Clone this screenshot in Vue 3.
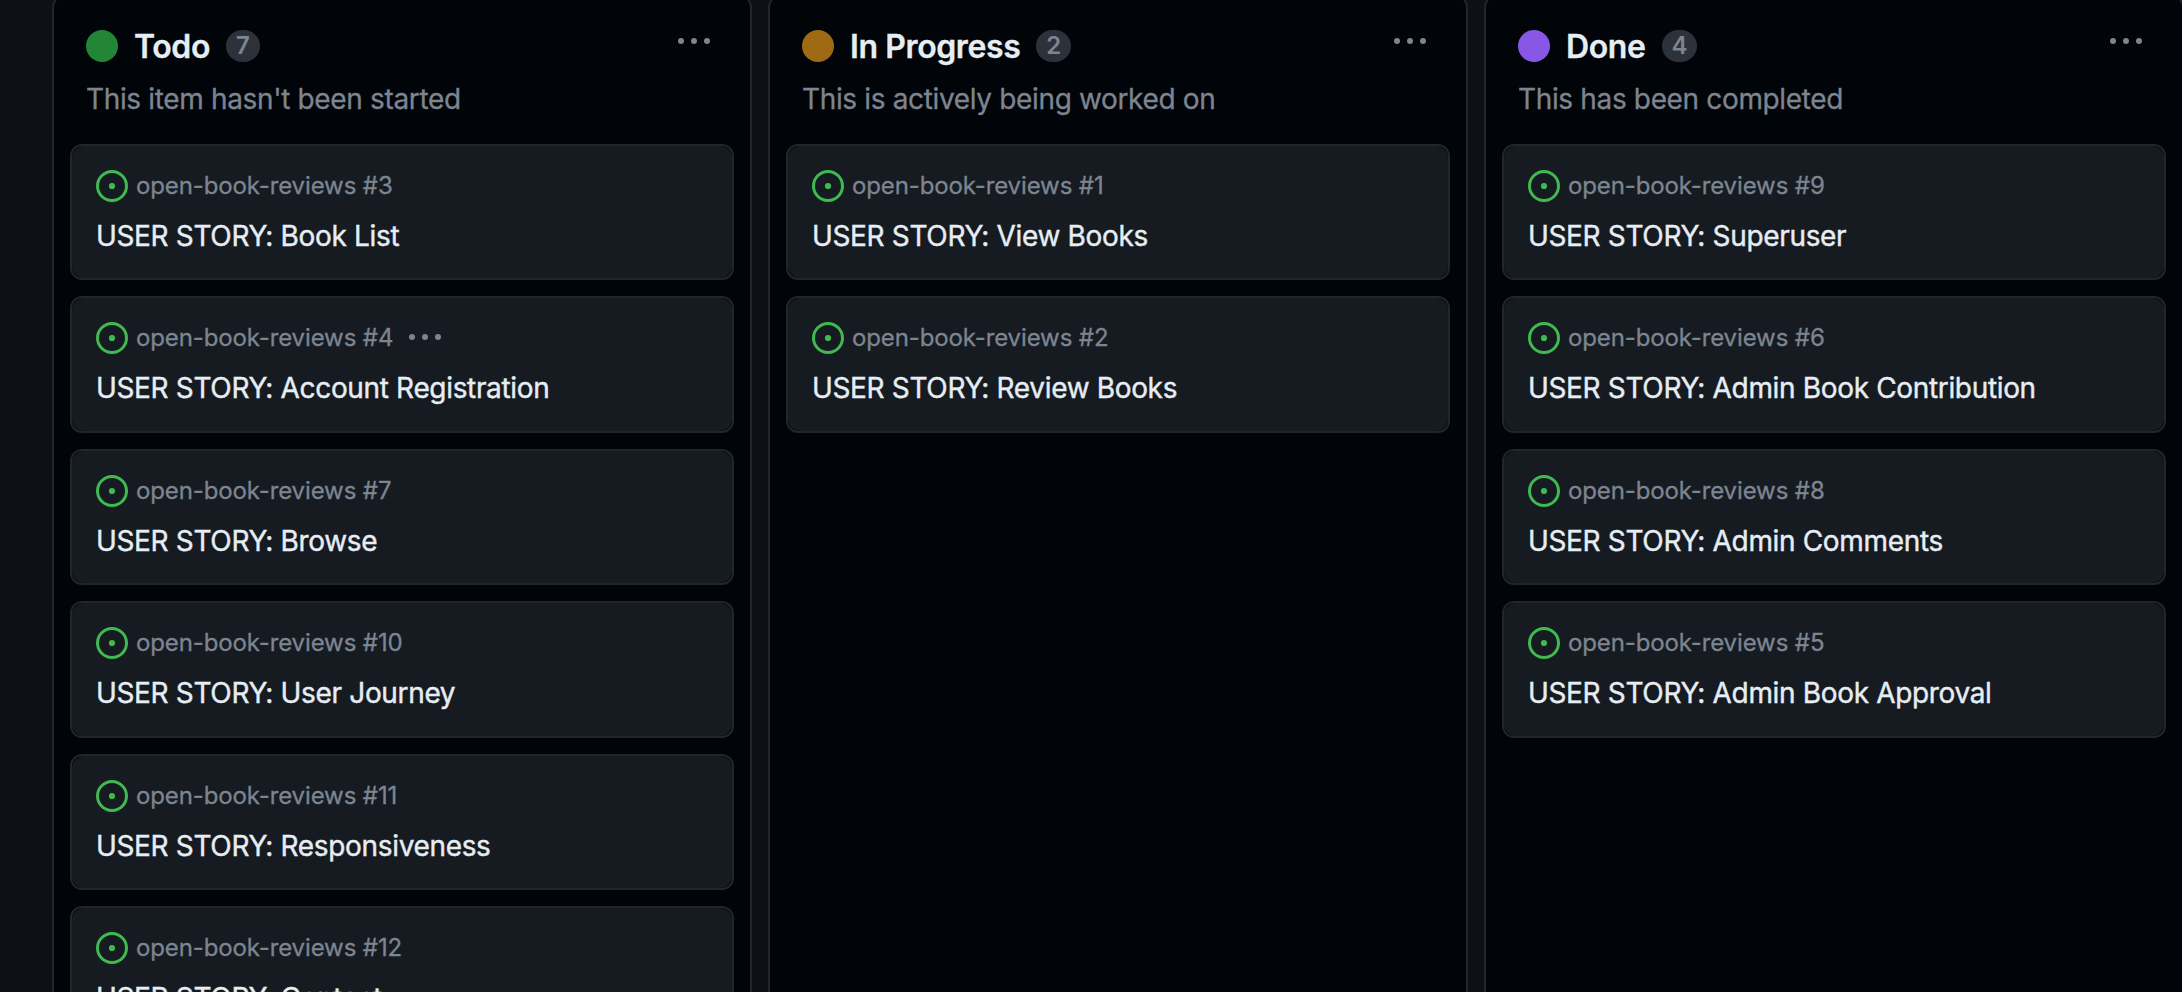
<script setup>
const columns = [
  {
    name: 'Todo',
    tone: 'green',
    count: 7,
    description: "This item hasn't been started",
    cards: [
      { number: 3, title: 'Book List' },
      { number: 4, title: 'Account Registration', menu: true },
      { number: 7, title: 'Browse' },
      { number: 10, title: 'User Journey' },
      { number: 11, title: 'Responsiveness' },
      { number: 12, title: 'Contact' },
    ],
  },
  {
    name: 'In Progress',
    tone: 'amber',
    count: 2,
    description: 'This is actively being worked on',
    cards: [
      { number: 1, title: 'View Books' },
      { number: 2, title: 'Review Books' },
    ],
  },
  {
    name: 'Done',
    tone: 'purple',
    count: 4,
    description: 'This has been completed',
    cards: [
      { number: 9, title: 'Superuser' },
      { number: 6, title: 'Admin Book Contribution' },
      { number: 8, title: 'Admin Comments' },
      { number: 5, title: 'Admin Book Approval' },
    ],
  },
]
</script>

<template>
  <main class="board">
    <section v-for="column in columns" :key="column.name" class="column">
      <header class="head">
        <div class="heading">
          <span class="dot" :class="column.tone"></span>
          <h2 class="name">{{ column.name }}</h2>
          <span class="count">{{ column.count }}</span>
          <svg class="kebab" viewBox="0 0 32 6" width="32" height="6">
            <circle cx="3" cy="3" r="3" />
            <circle cx="16" cy="3" r="3" />
            <circle cx="29" cy="3" r="3" />
          </svg>
        </div>
        <p class="description">{{ column.description }}</p>
      </header>
      <div class="cards">
        <article v-for="card in column.cards" :key="card.number" class="card">
          <div class="card-body">
            <div class="ref">
              <svg class="issue" viewBox="0 0 32 32" width="32" height="32">
                <circle cx="16" cy="16" r="14.5" fill="none" stroke="currentColor" stroke-width="3" />
                <circle cx="16" cy="16" r="3.1" fill="currentColor" />
              </svg>
              <span class="repo">open-book-reviews #{{ card.number }}</span>
              <svg v-if="card.menu" class="kebab inline" viewBox="0 0 32 6" width="32" height="6">
                <circle cx="3" cy="3" r="3" />
                <circle cx="16" cy="3" r="3" />
                <circle cx="29" cy="3" r="3" />
              </svg>
            </div>
            <h3 class="title">USER STORY: {{ card.title }}</h3>
          </div>
        </article>
      </div>
    </section>
  </main>
</template>

<style>
body {
  margin: 0;
  background: #0d1117;
}
</style>

<style scoped>
.board {
  box-sizing: border-box;
  display: flex;
  gap: 16px;
  height: 992px;
  padding-left: 52px;
  overflow: hidden;
  background: #0d1117;
  font-family: Inter, "Liberation Sans", sans-serif;
}
.column {
  box-sizing: border-box;
  flex: 0 0 700px;
  height: 1020px;
  margin-top: -5px;
  padding: 33px 16px 0;
  border: 2px solid #21262d;
  border-radius: 12px;
  background: #010409;
}
.head {
  height: 114px;
  padding: 0 16px;
}
.heading {
  display: flex;
  align-items: center;
  height: 32px;
}
.dot {
  width: 32px;
  height: 32px;
  border-radius: 50%;
}
.green { background: #238636; }
.amber { background: #9e6a13; }
.purple { background: #8957e5; }
.name {
  margin: 0 0 0 16px;
  padding-top: 1px;
  color: #e6edf3;
  font-size: 32px;
  font-weight: 600;
  line-height: 32px;
  letter-spacing: -0.4px;
  -webkit-text-stroke: 0.3px currentColor;
}
.count {
  margin-left: 16px;
  padding: 0 10px;
  border-radius: 16px;
  background: #2d3139;
  color: #7d8590;
  font-size: 24px;
  font-weight: 600;
  line-height: 32px;
}
.kebab {
  margin: -10px 8px 0 auto;
  fill: #7d8590;
}
.kebab.inline {
  margin: -2px 0 0 16px;
}
.description {
  margin: 16px 0 0;
  color: #7d8590;
  font-size: 28px;
  line-height: 42px;
  letter-spacing: -0.35px;
  white-space: nowrap;
  -webkit-text-stroke: 0.3px currentColor;
}
.cards {
  display: grid;
  gap: 16px;
}
.card {
  box-sizing: border-box;
  height: 136.4px;
  border: 2px solid #21262d;
  border-radius: 12px;
}
.card-body {
  box-sizing: border-box;
  height: 100%;
  padding: 24px;
  border-radius: 12px;
  background: #161b22;
}
.ref {
  display: flex;
  align-items: center;
  height: 32px;
}
.issue {
  color: #3fb950;
}
.repo {
  margin-left: 8px;
  color: #7d8590;
  font-size: 24px;
  line-height: 32px;
  letter-spacing: -0.12px;
  white-space: nowrap;
  -webkit-text-stroke: 0.3px currentColor;
}
.title {
  margin: 13px 0 0;
  color: #e6edf3;
  font-size: 28px;
  font-weight: 400;
  line-height: 42px;
  letter-spacing: -0.34px;
  white-space: nowrap;
  -webkit-text-stroke: 0.4px currentColor;
}
</style>
